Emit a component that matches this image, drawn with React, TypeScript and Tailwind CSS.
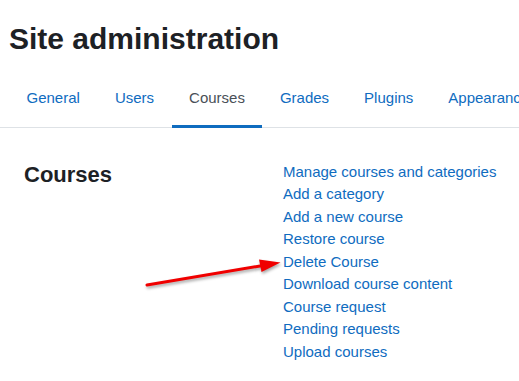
import React from 'react';

const tabs = ['General', 'Users', 'Courses', 'Grades', 'Plugins', 'Appearance'];

const links = [
  'Manage courses and categories',
  'Add a category',
  'Add a new course',
  'Restore course',
  'Delete Course',
  'Download course content',
  'Course request',
  'Pending requests',
  'Upload courses',
];

const App: React.FC = () => {
  return (
    <div
      className="relative w-[519px] h-[381px] overflow-hidden bg-white text-[#1d2125]"
      style={{ fontFamily: '"Liberation Sans", Arial, sans-serif' }}
    >
      <h2 className="pl-[9px] pt-[21px] text-[30px] font-bold leading-[36px]">Site administration</h2>

      {/* tabs */}
      <ul className="mt-[12px] flex border-b border-[#dee2e6] pl-[9px] whitespace-nowrap">
        {tabs.map((tab) => (
          <li key={tab}>
            <a
              href="#"
              className={
                tab === 'Courses'
                  ? 'block -mb-px border-b-[3px] border-[#0f6cbf] px-[17.5px] pt-[18px] pb-[15px] text-[15px] leading-[22.5px] text-[#495057]'
                  : 'block px-[17.5px] pt-[18px] pb-[17px] text-[15px] leading-[22.5px] text-[#0f6cbf]'
              }
            >
              {tab}
            </a>
          </li>
        ))}
      </ul>

      {/* courses section */}
      <div className="flex pl-[24px] pt-[32px]">
        <h3 className="w-[259px] pt-[2px] text-[22px] font-bold leading-[26.4px]">Courses</h3>
        <ul className="pt-px">
          {links.map((link) => (
            <li key={link}>
              <a href="#" className="block text-[15px] leading-[22.5px] text-[#0f6cbf]">
                {link}
              </a>
            </li>
          ))}
        </ul>
      </div>

      {/* red annotation arrow */}
      <svg
        className="absolute left-0 top-0 pointer-events-none"
        width="519"
        height="381"
        viewBox="0 0 519 381"
        style={{ filter: 'drop-shadow(1px 2px 1.5px rgba(0,0,0,0.35))' }}
      >
        <line x1="147" y1="285" x2="263" y2="265.5" stroke="#f00000" strokeWidth="3" strokeLinecap="round" />
        <polygon points="280.5,262.5 259,259.5 261.5,272" fill="#f00000" />
      </svg>
    </div>
  );
};

export default App;
